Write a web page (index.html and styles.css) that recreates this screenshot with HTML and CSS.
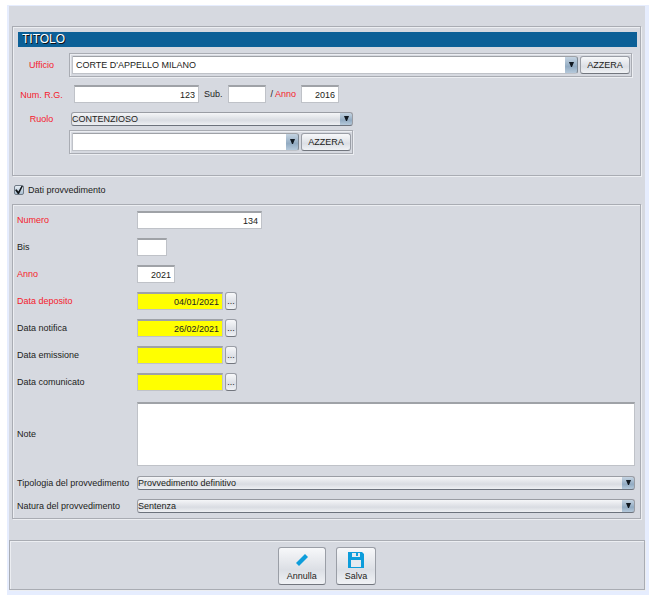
FILE: index.html
```html
<!DOCTYPE html>
<html lang="it">
<head>
    <meta charset="UTF-8">
    <meta name="viewport" content="width=device-width, initial-scale=1.0">
    <title>Dati provvedimento</title>
    <link rel="stylesheet" href="styles.css">
</head>
<body>
    <form class="window">
        <section class="panel titolo">
            <h1>TITOLO</h1>

            <div class="titolo-grid">
                <label class="required" for="ufficio">Ufficio</label>
                <div class="combo-box">
                    <select class="combo" id="ufficio">
                        <option>CORTE D'APPELLO MILANO</option>
                    </select>
                    <button type="button" class="btn">AZZERA</button>
                </div>

                <label class="required" for="numRg">Num. R.G.</label>
                <div class="rg-fields">
                    <input type="text" class="long" id="numRg" value="123">
                    <label for="sub">Sub.</label>
                    <input type="text" class="short" id="sub">
                    <label for="annoRg">/ <span class="required">Anno</span></label>
                    <input type="text" class="short" id="annoRg" value="2016">
                </div>

                <label class="required" for="ruolo">Ruolo</label>
                <div class="ruolo-fields">
                    <select class="flat" id="ruolo">
                        <option>CONTENZIOSO</option>
                    </select>
                </div>

                <div class="combo-box ruolo-box">
                    <select class="combo" aria-label="Dettaglio ruolo">
                        <option></option>
                    </select>
                    <button type="button" class="btn">AZZERA</button>
                </div>
            </div>
        </section>

        <div class="check-row">
            <input type="checkbox" id="dati" checked>
            <label for="dati">Dati provvedimento</label>
        </div>

        <section class="panel dati">
            <div class="row">
                <label class="required" for="numero">Numero</label>
                <input type="text" class="long" id="numero" value="134">
            </div>
            <div class="row">
                <label for="bis">Bis</label>
                <input type="text" class="tiny" id="bis">
            </div>
            <div class="row">
                <label class="required" for="anno">Anno</label>
                <input type="text" class="short" id="anno" value="2021">
            </div>
            <div class="row">
                <label class="required" for="deposito">Data deposito</label>
                <input type="text" class="date" id="deposito" value="04/01/2021">
                <button type="button" class="btn pick">...</button>
            </div>
            <div class="row">
                <label for="notifica">Data notifica</label>
                <input type="text" class="date" id="notifica" value="26/02/2021">
                <button type="button" class="btn pick">...</button>
            </div>
            <div class="row">
                <label for="emissione">Data emissione</label>
                <input type="text" class="date" id="emissione">
                <button type="button" class="btn pick">...</button>
            </div>
            <div class="row">
                <label for="comunicato">Data comunicato</label>
                <input type="text" class="date" id="comunicato">
                <button type="button" class="btn pick">...</button>
            </div>
            <div class="row note-row">
                <label for="note">Note</label>
                <textarea id="note"></textarea>
            </div>
            <div class="row">
                <label for="tipologia">Tipologia del provvedimento</label>
                <select class="flat" id="tipologia">
                    <option>Provvedimento definitivo</option>
                </select>
            </div>
            <div class="row">
                <label for="natura">Natura del provvedimento</label>
                <select class="flat" id="natura">
                    <option>Sentenza</option>
                </select>
            </div>
        </section>

        <footer class="actions">
            <button type="button" class="btn action">
                <svg width="16" height="16" viewBox="0 0 16 16">
                    <path d="M2 11L11 2L14 5L5 14Z" fill="#0d9ddb"/>
                </svg>
                Annulla
            </button>
            <button type="button" class="btn action">
                <svg width="16" height="16" viewBox="0 0 16 16">
                    <path d="M0 0H14L16 2V16H0Z" fill="#0d9ddb"/>
                    <path d="M4 1H12V5H4ZM3 8H13V15H3Z" fill="#e4eaf0"/>
                    <path d="M8 1H10V4H8Z" fill="#0d9ddb"/>
                </svg>
                Salva
            </button>
        </footer>
    </form>
</body>
</html>
```
FILE: styles.css
```css
* {
    box-sizing: border-box;
}

body {
    margin: 0;
    padding: 5px 19px 6px 7px;
    background: white;
    color: #1c1c20;
    font-family: "Liberation Sans", Arial, sans-serif;
    font-size: 9px;
    line-height: 12px;
}

.window {
    background: #d6d9e0;
    border: solid #e6edfe;
    border-width: 1px 4px 5px 2px;
    padding-top: 20px;
}

/* etched border */
.panel,
.combo-box,
.actions {
    border: 1px solid #a9acb3;
    box-shadow: inset 1px 1px 0 #eceef2, 1px 1px 0 #eceef2;
}

.panel {
    margin: 0 4px 0 3px;
}

h1 {
    margin: 0;
    padding: 0 4px;
    background: #0c6097;
    color: white;
    font-size: 12px;
    font-weight: normal;
    line-height: 15px;
    text-shadow: 1px 1px 0 #111;
}

input,
select,
textarea,
button {
    margin: 0;
    color: inherit;
    font: inherit;
}

input[type="text"],
textarea {
    height: 18px;
    padding: 0 3px;
    background: white;
    border: 1px solid #bfc2c8;
    border-top: 2px solid #9fa2a7;
    border-radius: 0;
    text-align: right;
}

textarea {
    flex: 1;
    height: 64px;
    padding: 2px 3px;
    text-align: left;
    resize: none;
}

input.long {
    width: 125px;
}

input.short {
    width: 38px;
}

input.tiny {
    width: 30px;
}

input[type="text"].date {
    width: 86px;
    background: #ffff00;
}

.required {
    color: #f5202c;
}

.btn {
    padding: 0;
    background: linear-gradient(#f7f8fa, #dcdfe5 60%, #f0f2f5);
    border: 1px solid #9a9ea6;
    border-bottom-color: #72767e;
    border-radius: 3px;
}

select {
    appearance: none;
    min-width: 0;
    height: 14px;
    padding: 0 20px 0 0;
    border: 1px solid #9a9da4;
    border-bottom: 1px solid #6c727c;
    border-radius: 3px;
    line-height: 12px;
    background:
        url("data:image/svg+xml,%3Csvg xmlns='http://www.w3.org/2000/svg' width='11' height='6'%3E%3Cpath d='M3 0H8L6 5H5Z' fill='%23101820'/%3E%3C/svg%3E") right center no-repeat,
        linear-gradient(#c5d4e2, #92abc2 60%, #b5c9db) right / 12px 100% no-repeat,
        linear-gradient(#f5f6f8, #d9dce2 60%, #eef0f3);
}

select.combo {
    flex: 1;
    height: 18px;
    padding-left: 3px;
    border-color: #9fa2a7 #7d8792 #bfc2c8 #bfc2c8;
    border-radius: 0 3px 3px 0;
    background:
        url("data:image/svg+xml,%3Csvg xmlns='http://www.w3.org/2000/svg' width='11' height='6'%3E%3Cpath d='M3 0H8L6 5H5Z' fill='%23101820'/%3E%3C/svg%3E") right center no-repeat,
        linear-gradient(#c5d4e2, #92abc2 60%, #b5c9db) right / 12px 100% no-repeat,
        white;
}

.titolo {
    padding: 5px 3px 21px 5px;
}

.titolo-grid {
    display: grid;
    grid-template-columns: 47px 1fr;
    column-gap: 4px;
    align-items: center;
    padding: 6px 5px 0 0;
}

.titolo-grid > label {
    text-align: center;
}

.combo-box {
    display: flex;
    gap: 2px;
    padding: 2px 1px 2px 2px;
}

.combo-box .btn {
    width: 50px;
}

.rg-fields {
    display: flex;
    align-items: center;
    gap: 5px;
    padding: 8px 5px 9px;
}

.ruolo-fields {
    display: flex;
    padding-left: 2px;
}

.ruolo-fields .flat {
    width: 282px;
}

.ruolo-box {
    grid-column: 2;
    width: 284px;
    margin-top: 4px;
}

.check-row {
    display: flex;
    align-items: center;
    gap: 4px;
    padding: 8px 5px;
}

.check-row input {
    appearance: none;
    display: grid;
    width: 10px;
    height: 10px;
    border: 1px solid #6f7a86;
    border-radius: 2px;
    background: linear-gradient(#e6edf3, #a9bfd2);
}

.check-row input:checked::before {
    content: "";
    place-self: center;
    width: 8px;
    height: 8px;
    background: #101418;
    clip-path: polygon(0 50%, 20% 40%, 42% 68%, 80% 0, 100% 0, 50% 100%, 35% 100%);
}

.dati {
    display: flex;
    flex-direction: column;
    gap: 9px;
    padding: 6px 5px 5px 4px;
}

.row {
    display: flex;
    align-items: center;
}

.note-row {
    padding: 2px 0 1px;
}

.row > label {
    flex: none;
    width: 120px;
}

.row .flat {
    flex: 1;
}

.pick {
    width: 12px;
    height: 18px;
    margin-left: 2px;
}

.actions {
    display: flex;
    justify-content: center;
    gap: 10px;
    margin-top: 21px;
    padding: 6px 5px 4px;
}

.action {
    display: flex;
    flex-direction: column;
    align-items: center;
    justify-content: space-between;
    min-width: 39px;
    height: 38px;
    padding: 4px 8px 2px;
}
```
